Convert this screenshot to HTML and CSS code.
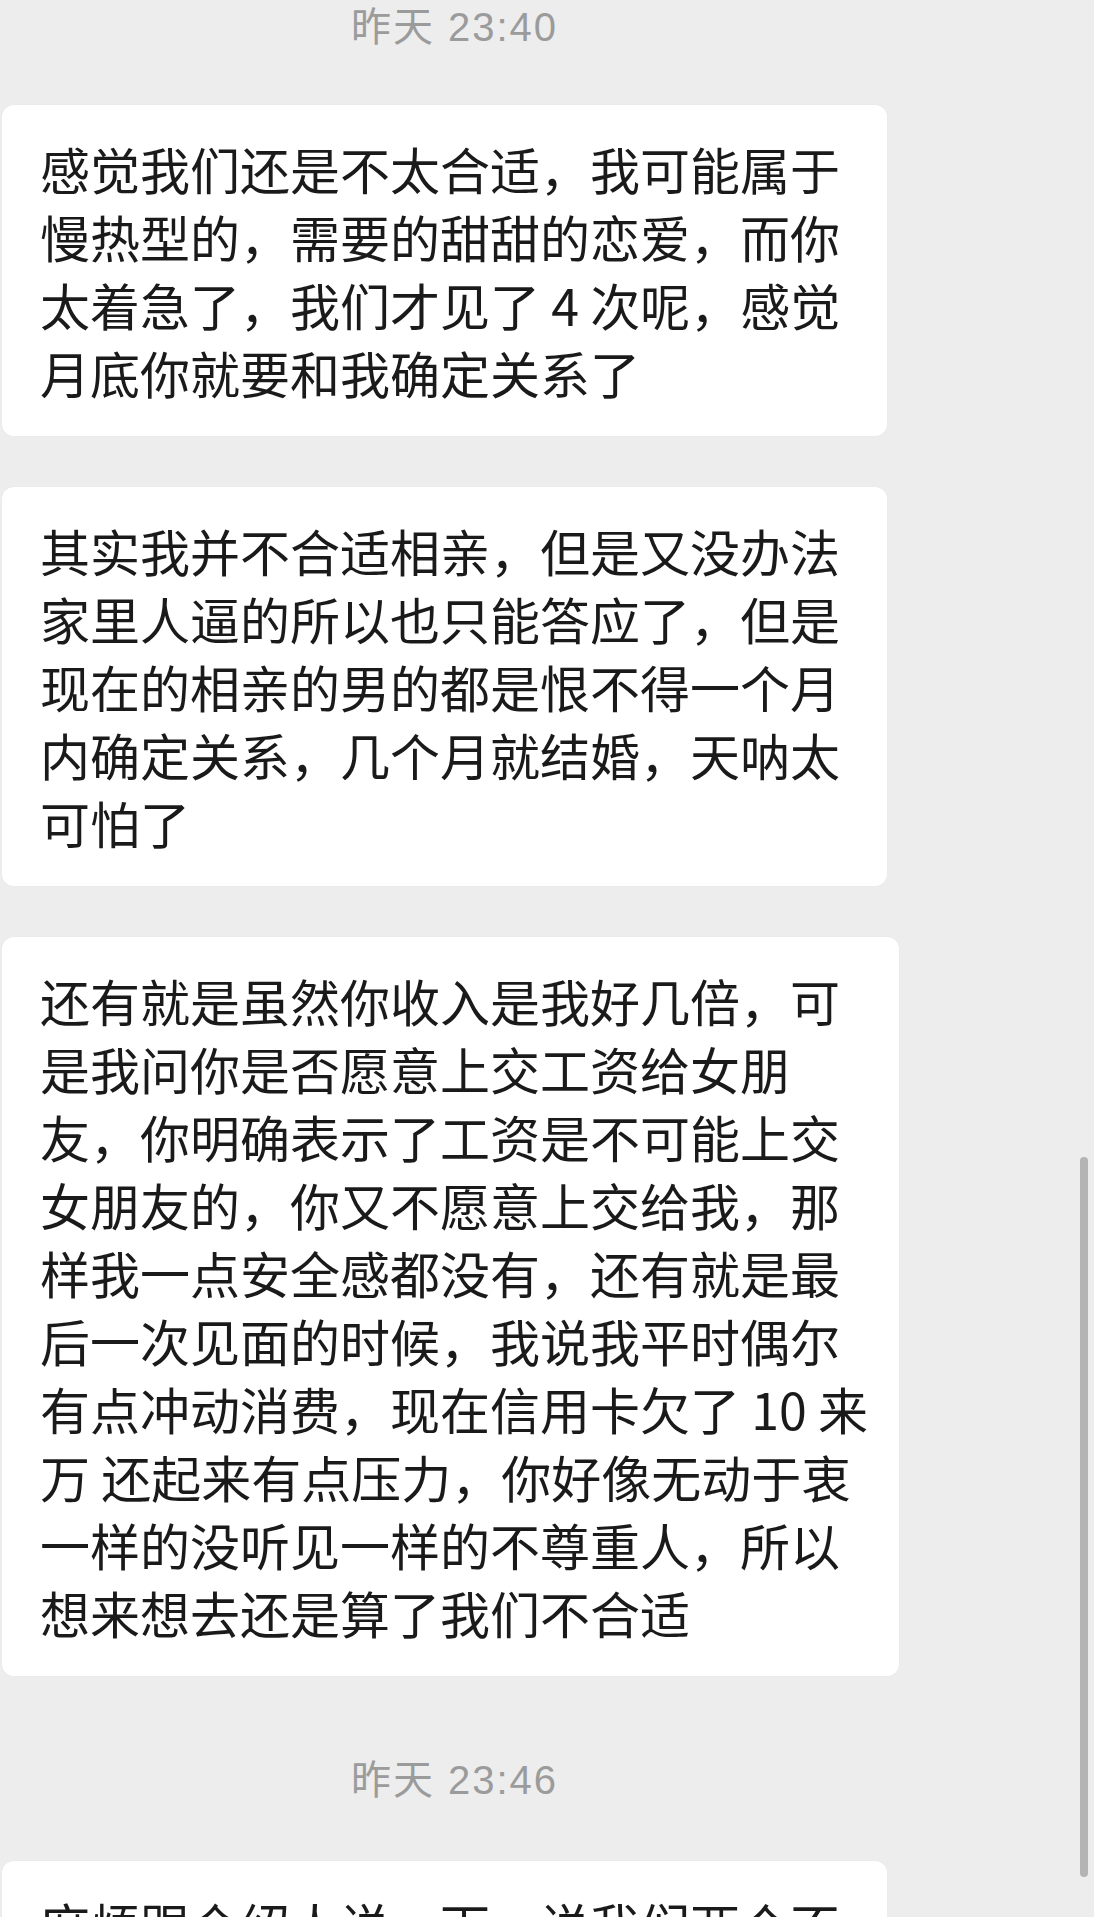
FILE: index.html
```html
<!DOCTYPE html>
<html lang="zh-CN">

<head>
    <meta charset="UTF-8">
    <meta name="viewport" content="width=device-width, initial-scale=1.0">
    <title>聊天记录</title>
    <link rel="stylesheet" href="styles.css">
</head>

<body class="body">

    <div class="chat">
        <div class="time time-first">昨天 23:40</div>

        <div class="msg">
            <div class="bubble">感觉我们还是不太合适，我可能属于<br>慢热型的，需要的甜甜的恋爱，而你<br>太着急了，我们才见了 4 次呢，感觉<br>月底你就要和我确定关系了</div>
        </div>

        <div class="msg">
            <div class="bubble">其实我并不合适相亲，但是又没办法<br>家里人逼的所以也只能答应了，但是<br>现在的相亲的男的都是恨不得一个月<br>内确定关系，几个月就结婚，天呐太<br>可怕了</div>
        </div>

        <div class="msg">
            <div class="bubble">还有就是虽然你收入是我好几倍，可<br>是我问你是否愿意上交工资给女朋<br>友，你明确表示了工资是不可能上交<br>女朋友的，你又不愿意上交给我，那<br>样我一点安全感都没有，还有就是最<br>后一次见面的时候，我说我平时偶尔<br>有点冲动消费，现在信用卡欠了 10 来<br>万 还起来有点压力，你好像无动于衷<br>一样的没听见一样的不尊重人，所以<br>想来想去还是算了我们不合适</div>
        </div>

        <div class="time time-next">昨天 23:46</div>

        <div class="msg">
            <div class="bubble">麻烦跟介绍人说一下，说我们两个不<br>合适</div>
        </div>
    </div>

    <!-- overlay scrollbar thumb -->
    <div class="scroll-thumb"></div>

</body>

</html>
```

FILE: styles.css
```css
html,
body {
    margin: 0;
    height: 100%;
    overflow: hidden;
}

.body {
    background: #ededed;
    font-family: "Noto Sans CJK SC", sans-serif;
    color: #1a1a1a;
}

.chat {
    width: 907px;
    padding-left: 2px;
    box-sizing: border-box;
}

.time {
    text-align: center;
    font-family: "Liberation Sans", "Noto Sans CJK SC", sans-serif;
    font-size: 40px;
    line-height: 50px;
    letter-spacing: 2px;
    color: #9b9b9b;
}

.time-first {
    padding-top: 2px;
    margin-bottom: 53px;
}

.time-next {
    margin-top: 79px;
    margin-bottom: 56px;
}

.msg {
    margin-bottom: 51px;
}

.bubble {
    display: inline-block;
    box-sizing: border-box;
    min-width: 885px;
    padding: 29px 31px 30px 38px;
    background: #ffffff;
    border-radius: 12px;
    font-size: 50px;
    line-height: 68px;
    white-space: nowrap;
    box-shadow: 0 0 2px rgba(0, 0, 0, 0.04);
}

.scroll-thumb {
    position: fixed;
    top: 1157px;
    right: 6px;
    width: 8px;
    height: 720px;
    border-radius: 4px;
    background: #b4b4b4;
}
```
